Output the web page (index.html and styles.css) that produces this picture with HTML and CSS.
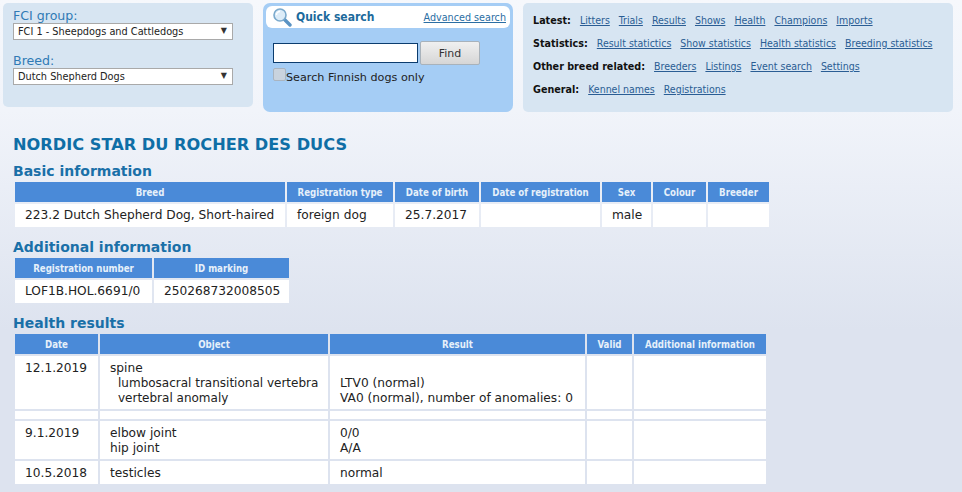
FILE: index.html
```html
<!DOCTYPE html>
<html>
  <head>
    <meta charset="utf-8">
    <title>Nordic Star du Rocher des Ducs</title>
    <link rel="stylesheet" href="styles.css">
  </head>
  <body>
    <header class="top">
      <form class="panel breed-select">
        <label>FCI group:</label>
        <div class="select-wrap">
          <select><option>FCI 1 - Sheepdogs and Cattledogs</option></select>
        </div>
        <label class="second">Breed:</label>
        <div class="select-wrap">
          <select><option>Dutch Shepherd Dogs</option></select>
        </div>
      </form>
      <form class="panel quick-search">
        <div class="quick-head">
          <svg class="lens" width="20" height="20" viewBox="0 0 20 20">
            <line x1="12" y1="12" x2="18" y2="18" stroke="#5a93c4" stroke-width="3.4" stroke-linecap="round"/>
            <circle cx="8" cy="8" r="6" fill="#dcecf8" stroke="#7aa9cc" stroke-width="1.6"/>
            <path d="M4.5 8a3.5 3.5 0 0 1 3.5-3.5" fill="none" stroke="#fff" stroke-width="1.4"/>
          </svg>
          <strong>Quick search</strong>
          <a href="#">Advanced search</a>
        </div>
        <div class="quick-row">
          <input type="text" class="quick-input">
          <input type="button" class="find" value="Find">
        </div>
        <label class="finnish"><input type="checkbox">Search Finnish dogs only</label>
      </form>
      <nav class="panel links">
        <p><b>Latest:</b><a href="#">Litters</a><a href="#">Trials</a><a href="#">Results</a><a href="#">Shows</a><a href="#">Health</a><a href="#">Champions</a><a href="#">Imports</a></p>
        <p><b>Statistics:</b><a href="#">Result statictics</a><a href="#">Show statistics</a><a href="#">Health statistics</a><a href="#">Breeding statistics</a></p>
        <p><b>Other breed related:</b><a href="#">Breeders</a><a href="#">Listings</a><a href="#">Event search</a><a href="#">Settings</a></p>
        <p><b>General:</b><a href="#">Kennel names</a><a href="#">Registrations</a></p>
      </nav>
    </header>

    <main class="content">
      <h1>NORDIC STAR DU ROCHER DES DUCS</h1>

      <h2>Basic information</h2>
      <table class="basic">
        <thead>
          <tr>
            <th class="w-breed">Breed</th>
            <th class="w-type">Registration type</th>
            <th class="w-birth">Date of birth</th>
            <th class="w-reg">Date of registration</th>
            <th class="w-sex">Sex</th>
            <th class="w-colour">Colour</th>
            <th class="w-breeder">Breeder</th>
          </tr>
        </thead>
        <tbody>
          <tr>
            <td>223.2 Dutch Shepherd Dog, Short-haired</td>
            <td>foreign dog</td>
            <td>25.7.2017</td>
            <td></td>
            <td>male</td>
            <td></td>
            <td></td>
          </tr>
        </tbody>
      </table>

      <h2>Additional information</h2>
      <table class="additional">
        <thead>
          <tr>
            <th class="w-number">Registration number</th>
            <th class="w-marking">ID marking</th>
          </tr>
        </thead>
        <tbody>
          <tr>
            <td>LOF1B.HOL.6691/0</td>
            <td>250268732008505</td>
          </tr>
        </tbody>
      </table>

      <h2>Health results</h2>
      <table class="health">
        <thead>
          <tr>
            <th class="w-date">Date</th>
            <th class="w-object">Object</th>
            <th class="w-result">Result</th>
            <th class="w-valid">Valid</th>
            <th class="w-info">Additional information</th>
          </tr>
        </thead>
        <tbody>
          <tr>
            <td>12.1.2019</td>
            <td>spine<br><span class="sub">lumbosacral transitional vertebra</span><br><span class="sub">vertebral anomaly</span></td>
            <td><br>LTV0 (normal)<br>VA0 (normal), number of anomalies: 0</td>
            <td></td>
            <td></td>
          </tr>
          <tr class="spacer">
            <td></td><td></td><td></td><td></td><td></td>
          </tr>
          <tr>
            <td>9.1.2019</td>
            <td>elbow joint<br>hip joint</td>
            <td>0/0<br>A/A</td>
            <td></td>
            <td></td>
          </tr>
          <tr>
            <td>10.5.2018</td>
            <td>testicles</td>
            <td>normal</td>
            <td></td>
            <td></td>
          </tr>
        </tbody>
      </table>
    </main>
  </body>
</html>
```

FILE: styles.css
```css
html {
  height: 100%;
}

body {
  margin: 0;
  min-height: 492px;
  font-family: "DejaVu Sans", Verdana, sans-serif;
  font-size: 12px;
  color: #1a1a1a;
  background: linear-gradient(#f6f8fc 0, #f1f4fa 110px, #dde3ef 330px, #dde3ef 100%);
}

/**
 * top panels
 */
.top {
  display: flex;
  align-items: flex-start;
  gap: 10px;
  padding: 3px 9px 0 3px;
}

.panel {
  box-sizing: border-box;
  border-radius: 5px;
  background: #d7e5f2;
}

.breed-select {
  width: 250px;
  height: 104px;
  padding: 6px 10px;
}

.breed-select label {
  display: block;
  font-size: 12.6px;
  line-height: 14px;
  color: #2f7ab5;
}

.breed-select .second {
  margin-top: 13px;
  line-height: 15px;
}

.select-wrap {
  position: relative;
  width: 220px;
}

.select-wrap::after {
  content: "\25BC";
  position: absolute;
  top: 3px;
  right: 6px;
  font-size: 8px;
  color: #333;
}

.select-wrap select {
  display: block;
  box-sizing: border-box;
  width: 220px;
  height: 17px;
  padding: 0 4px;
  border: 1px solid #a9a9a9;
  border-radius: 0;
  background: #fff;
  font-family: inherit;
  font-size: 9.75px;
  color: #222;
  appearance: none;
  -webkit-appearance: none;
}

.quick-search {
  width: 250px;
  height: 109px;
  padding: 3px;
  background: #a5cdf5;
  border-radius: 7px;
}

.quick-head {
  display: flex;
  align-items: center;
  height: 22px;
  padding: 0 4px 0 6px;
  border-radius: 6px;
  background: #fff;
}

.quick-head strong {
  margin-left: 4px;
  font-size: 12px;
  font-stretch: condensed;
  color: #1c6a9c;
}

.quick-head a {
  margin-left: auto;
  font-size: 10.7px;
  font-stretch: condensed;
  color: #2b6ea3;
}

.lens {
  flex: none;
}

.quick-row {
  display: flex;
  align-items: center;
  gap: 2px;
  margin: 13px 0 0 7px;
}

.quick-input {
  box-sizing: border-box;
  width: 145px;
  height: 20px;
  padding: 0 2px;
  border: 1px solid #0b3c6e;
  background: #fff;
}

.find {
  box-sizing: border-box;
  width: 60px;
  height: 24px;
  border: 1px solid #a8b2bb;
  border-radius: 2px;
  background: linear-gradient(#f0f0f0, #d6d6d6);
  font-family: inherit;
  font-size: 11px;
  color: #333;
}

.finnish {
  display: flex;
  align-items: center;
  margin: 6px 0 0 7px;
  font-size: 11.2px;
  color: #222;
}

.finnish input {
  box-sizing: border-box;
  width: 13px;
  height: 13px;
  margin: -6px 0 0;
  border: 1px solid #a9b4c0;
  border-radius: 2px;
  background: #c9d3de;
  appearance: none;
  -webkit-appearance: none;
}

.links {
  width: 430px;
  height: 109px;
  padding: 7px 10px;
}

.links p {
  margin: 0;
  height: 23px;
  line-height: 20px;
  font-size: 10.5px;
  font-stretch: condensed;
  white-space: nowrap;
}

.links b {
  margin-right: 9px;
  font-size: 10.7px;
  color: #111;
}

.links a {
  margin-right: 9px;
  color: #2a5d94;
}

/**
 * page content
 */
.content {
  padding: 25px 0 0 13px;
}

h1 {
  margin: 0;
  font-size: 16.2px;
  line-height: 16px;
  color: #0f6ea6;
}

h2 {
  margin: 10px 0 0;
  font-size: 14px;
  line-height: 17px;
  color: #1a70a8;
}

table {
  table-layout: fixed;
  border-collapse: separate;
  border-spacing: 2px;
}

.basic { width: 758px; }
.additional { width: 278px; }
.health { width: 755px; }

th {
  height: 20px;
  padding: 0;
  background: #4a8ad8;
  font-size: 9.6px;
  font-stretch: condensed;
  font-weight: bold;
  color: #e6f0fa;
  text-align: center;
}

td {
  height: 23px;
  padding: 0 0 0 10px;
  background: #fff;
  font-size: 12.2px;
  line-height: 15px;
  vertical-align: middle;
  color: #222;
  white-space: nowrap;
}

.health tbody td {
  height: auto;
  padding: 5px 0 3px 10px;
  vertical-align: top;
}

.health .spacer td {
  height: 8px;
  padding: 0;
}

.sub {
  padding-left: 8px;
  font-size: 12px;
}

.w-breed { width: 270px; }
.w-type { width: 106px; }
.w-birth { width: 84px; }
.w-reg { width: 119px; }
.w-sex { width: 49px; }
.w-colour { width: 53px; }
.w-breeder { width: 61px; }
.w-number { width: 137px; }
.w-marking { width: 135px; }
.w-date { width: 83px; }
.w-object { width: 228px; }
.w-result { width: 255px; }
.w-valid { width: 45px; }
.w-info { width: 132px; }
```
